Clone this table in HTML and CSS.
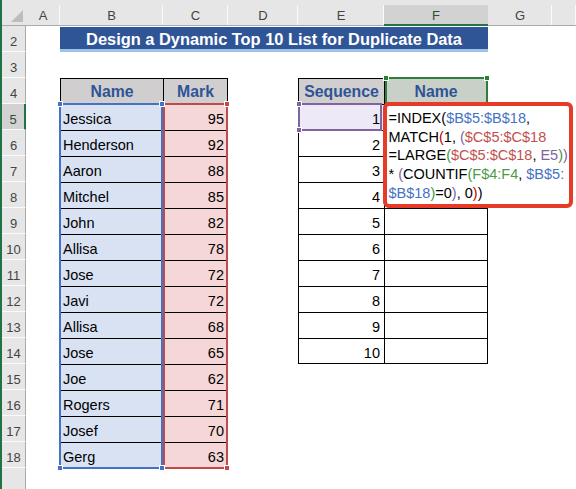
FILE: index.html
```html
<!DOCTYPE html>
<html>
<head>
<meta charset="utf-8">
<link rel="stylesheet" href="styles.css">
</head>
<body>
<div class="sheet">
  <!-- header row -->
  <div class="corner"><svg width="12" height="12" viewBox="0 0 12 12"><polygon points="12,0 12,12 0,12" fill="#BDBDBD"/></svg></div>
  <div class="ch">A</div><div class="ch">B</div><div class="ch">C</div><div class="ch">D</div><div class="ch">E</div><div class="ch sel">F</div><div class="ch">G</div><div class="ch"></div>

  <!-- row 2 -->
  <div class="rh">2</div><div></div>
  <div class="title">Design a Dynamic Top 10 List for Duplicate Data</div>
  <div></div><div></div>

  <!-- row 3 -->
  <div class="rh">3</div><div></div><div></div><div></div><div></div><div></div><div></div><div></div><div></div>

  <!-- row 4 -->
  <div class="rh">4</div><div></div>
  <div class="c hd">Name</div><div class="c hd rc">Mark</div><div></div>
  <div class="c hd">Sequence</div><div class="c hd hd-f rc">Name</div><div></div><div></div>

  <!-- rows 5-14 -->
  <div class="rh sel">5</div><div></div><div class="c nm">Jessica</div><div class="c mk rc">95</div><div></div><div class="c sq sq-sel">1</div><div class="c rc"></div><div></div><div></div>
  <div class="rh">6</div><div></div><div class="c nm">Henderson</div><div class="c mk rc">92</div><div></div><div class="c sq">2</div><div class="c rc"></div><div></div><div></div>
  <div class="rh">7</div><div></div><div class="c nm">Aaron</div><div class="c mk rc">88</div><div></div><div class="c sq">3</div><div class="c rc"></div><div></div><div></div>
  <div class="rh">8</div><div></div><div class="c nm">Mitchel</div><div class="c mk rc">85</div><div></div><div class="c sq">4</div><div class="c rc"></div><div></div><div></div>
  <div class="rh">9</div><div></div><div class="c nm">John</div><div class="c mk rc">82</div><div></div><div class="c sq">5</div><div class="c rc"></div><div></div><div></div>
  <div class="rh">10</div><div></div><div class="c nm">Allisa</div><div class="c mk rc">78</div><div></div><div class="c sq">6</div><div class="c rc"></div><div></div><div></div>
  <div class="rh">11</div><div></div><div class="c nm">Jose</div><div class="c mk rc">72</div><div></div><div class="c sq">7</div><div class="c rc"></div><div></div><div></div>
  <div class="rh">12</div><div></div><div class="c nm">Javi</div><div class="c mk rc">72</div><div></div><div class="c sq">8</div><div class="c rc"></div><div></div><div></div>
  <div class="rh">13</div><div></div><div class="c nm">Allisa</div><div class="c mk rc">68</div><div></div><div class="c sq">9</div><div class="c rc"></div><div></div><div></div>
  <div class="rh">14</div><div></div><div class="c nm">Jose</div><div class="c mk rc">65</div><div></div><div class="c sq br">10</div><div class="c rc br"></div><div></div><div></div>

  <!-- rows 15-18 -->
  <div class="rh">15</div><div></div><div class="c nm">Joe</div><div class="c mk rc">62</div><div></div><div></div><div></div><div></div><div></div>
  <div class="rh">16</div><div></div><div class="c nm">Rogers</div><div class="c mk rc">71</div><div></div><div></div><div></div><div></div><div></div>
  <div class="rh">17</div><div></div><div class="c nm">Josef</div><div class="c mk rc">70</div><div></div><div></div><div></div><div></div><div></div>
  <div class="rh">18</div><div></div><div class="c nm br">Gerg</div><div class="c mk rc br">63</div><div></div><div></div><div></div><div></div><div></div>

  <!-- row 19 (partial) -->
  <div class="rh last"></div><div></div><div></div><div></div><div></div><div></div><div></div><div></div><div></div>

  <!-- range highlights (overlays) -->
  <div class="hl hl-red"><i class="h tr"></i><i class="h br-h"></i></div>
  <div class="hl hl-blue"><i class="h tl"></i><i class="h tr"></i><i class="h bl"></i><i class="h br-h"></i></div>
  <div class="hl hl-purple"><i class="h tl"></i><i class="h bl"></i></div>
  <div class="hl hl-green"><i class="h tl"></i><i class="h tr"></i></div>

  <!-- formula tooltip -->
  <div class="formula">=INDEX(<span class="f-blue">$B$5:$B$18</span>,<br>MATCH<span class="p-red">(</span>1, <span class="p-purple">(</span><span class="f-red">$C$5:$C$18</span><br>=LARGE<span class="p-green">(</span><span class="f-red">$C$5:$C$18</span>, <span class="f-purple">E5</span><span class="p-green">)</span><span class="p-purple">)</span><br>* <span class="p-purple">(</span>COUNTIF<span class="p-green">(</span><span class="f-green">F$4:F4</span>, <span class="f-blue">$B$5:</span><br><span class="f-blue">$B$18</span><span class="p-green">)</span>=0<span class="p-purple">)</span>, 0<span class="p-red">)</span>)</div>
</div>
</body>
</html>
```

FILE: styles.css
```css
html, body {
  margin: 0;
  padding: 0;
  background: #ffffff;
}

body {
  width: 576px;
  height: 489px;
  overflow: hidden;
  font-family: "Liberation Sans", Arial, sans-serif;
  color: #000;
}

.sheet {
  position: relative;
  display: grid;
  grid-template-columns: 24px 34px 103px 65px 70px 86px 104px 64px 1fr;
  grid-template-rows: repeat(18, 26px) 1fr;
  height: 489px;
  box-sizing: border-box;
  border-left: 2px solid #217346;
  background: #fff;
}

.sheet > div {
  min-width: 0;
  box-sizing: border-box;
}

/* column headers */
.corner {
  background: #E6E6E6;
  border-bottom: 1px solid #ABABAB;
  display: flex;
  align-items: flex-end;
  justify-content: flex-end;
  padding: 0 3px 3px 0;
}

.corner svg {
  display: block;
}

.ch {
  background-color: #E6E6E6;
  background-image: linear-gradient(to left, #FAFAFA 1px, transparent 1px);
  background-size: 100% 20px;
  background-position: bottom;
  background-repeat: no-repeat;
  border-bottom: 1px solid #ABABAB;
  display: flex;
  align-items: center;
  justify-content: center;
  padding-top: 6px;
  font-size: 13px;
  color: #444;
}

.ch.sel {
  background-image: linear-gradient(#D2D2D2, #D2D2D2);
  background-size: 100% 19px;
  border-bottom: 2px solid #217346;
  padding-top: 7px;
  color: #2d4d39;
}

/* row headers */
.rh {
  background: #E6E6E6;
  border-right: 1px solid #ABABAB;
  border-bottom: 1px solid #FAFAFA;
  display: flex;
  align-items: center;
  justify-content: center;
  padding-top: 5px;
  font-size: 13px;
  color: #444;
}

.rh.sel {
  background: #D2D2D2;
  border-right: 2px solid #217346;
  color: #2d4d39;
}

.rh.last {
  border-bottom: none;
}

/* title */
.title {
  grid-column: 3 / 8;
  margin-top: 1px;
  background: #2F5597;
  border-bottom: 3px solid #9DC3E6;
  color: #fff;
  font-weight: bold;
  font-size: 16.4px;
  display: flex;
  align-items: center;
  justify-content: center;
  padding-top: 2px;
  white-space: nowrap;
}

/* table cells */
.c {
  border-top: 1px solid #000;
  border-left: 1px solid #000;
  display: flex;
  align-items: center;
  padding-top: 3px;
  font-size: 14.5px;
  white-space: nowrap;
  overflow: hidden;
}

.c.rc {
  border-right: 1px solid #000;
}

.c.br {
  border-bottom: 1px solid #000;
}

.hd {
  background: #D0CECE;
  justify-content: center;
  font-weight: bold;
  font-size: 15.8px;
  color: #2F5496;
  padding-top: 1px;
}

.hd-f {
  background: #C8D0C8;
}

.nm {
  background: #D9E2F3;
  padding-left: 2px;
}

.mk {
  background: #F5D7D8;
  justify-content: flex-end;
  padding-right: 3px;
}

.sq {
  justify-content: flex-end;
  padding-right: 4px;
}

.sq-sel {
  background: #EEE9F6;
}

/* range highlight overlays: absolutely positioned inside their grid area */
.hl {
  position: absolute;
  z-index: 3;
  pointer-events: none;
  box-sizing: border-box;
}

.hl-blue {
  grid-column: 3 / 4;
  grid-row: 5 / 19;
  inset: -1px 0 -1px -1px;
  border: 2px solid #4472C4;
}

.hl-red {
  grid-column: 4 / 5;
  grid-row: 5 / 19;
  inset: -1px 0 -1px 0;
  border: 2px solid #BE4B48;
}

.hl-purple {
  grid-column: 6 / 7;
  grid-row: 5 / 6;
  inset: -1px 2px -1px 0;
  border: 2px solid #8064A2;
}

.hl-green {
  grid-column: 7 / 8;
  grid-row: 4 / 5;
  inset: -1px 0 0 1px;
  border: 2px solid #2E7D3A;
}

.h {
  position: absolute;
  width: 6px;
  height: 6px;
  box-sizing: border-box;
  border: 1px solid #fff;
}

.hl-blue .h { background: #4472C4; }
.hl-red .h { background: #BE4B48; }
.hl-purple .h { background: #8064A2; }
.hl-green .h { background: #2E7D3A; }

.h.tl { left: -4px; top: -4px; }
.h.tr { right: -4px; top: -4px; }
.h.bl { left: -4px; bottom: -4px; }
.h.br-h { right: -4px; bottom: -4px; }

/* formula tooltip */
.formula {
  grid-column: 7 / 10;
  grid-row: 5 / 9;
  position: absolute;
  inset: -2px 3px 0 -1.5px;
  z-index: 5;
  box-sizing: border-box;
  background: #fff;
  border: 4px solid #E63B26;
  border-radius: 6px;
  padding: 3px 2px 0 2px;
  font-size: 14.5px;
  line-height: 18.7px;
  white-space: nowrap;
  color: #000;
  overflow: hidden;
}

.f-blue { color: #4472C4; }
.f-red { color: #C0504D; }
.f-purple { color: #8064A2; }
.f-green { color: #4F9A4A; }
.p-red { color: #C00000; }
.p-purple { color: #8064A2; }
.p-green { color: #3E9A3E; }
```
